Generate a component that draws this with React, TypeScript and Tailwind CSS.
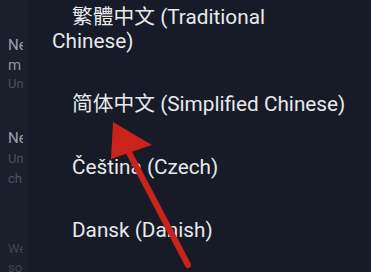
export default function App() {
    const items = [
        '繁體中文 (Traditional Chinese)',
        '简体中文 (Simplified Chinese)',
        'Čeština (Czech)',
        'Dansk (Danish)',
    ]

    return (
        <div className="relative flex h-[272px] w-[371px] overflow-hidden bg-[#161b27] font-['Roboto','Noto_Sans_CJK_SC',sans-serif]">
            {/* Left — list behind the dialog */}
            <div className="w-[28px] shrink-0 bg-[#1a1f2b] pl-2 pt-[34px]">
                <div className="flex w-[15px] flex-col overflow-hidden whitespace-nowrap">
                    <p className="text-[15px] leading-[22px] text-[#9aa0a9]">Ne</p>
                    <p className="text-[15px] leading-[18px] text-[#8e949c]">m</p>
                    <p className="text-[13px] leading-[20px] text-[#4b5263]">Un</p>
                    <p className="mt-[33px] text-[15px] leading-[22px] text-[#9aa0a9]">Ne</p>
                    <p className="text-[13px] leading-[20px] text-[#4b5263]">Un</p>
                    <p className="text-[13px] leading-[20px] text-[#4b5263]">ch</p>
                    <p className="mt-[50px] text-[13px] leading-[20px] text-[#3f4552]">We</p>
                    <p className="text-[13px] leading-[18px] text-[#3f4552]">so</p>
                </div>
            </div>

            {/* Right — language list */}
            <div className="flex flex-1 flex-col gap-[39px] pl-[24px] pr-[23px] pt-[5px]">
                {items.map((label) => (
                    <p key={label} className="indent-[20px] text-[20.75px] leading-[24px] text-[#e9e9ec]">
                        {label}
                    </p>
                ))}
            </div>

            {/* Annotation arrow */}
            <svg className="pointer-events-none absolute left-0 top-0" width="371" height="272" viewBox="0 0 371 272">
                <line x1="188" y1="265" x2="124" y2="143" stroke="#c9231c" strokeWidth="6" strokeLinecap="round" />
                <polygon points="113,122 152,145 111,159" fill="#c9231c" />
            </svg>
        </div>
    )
}
